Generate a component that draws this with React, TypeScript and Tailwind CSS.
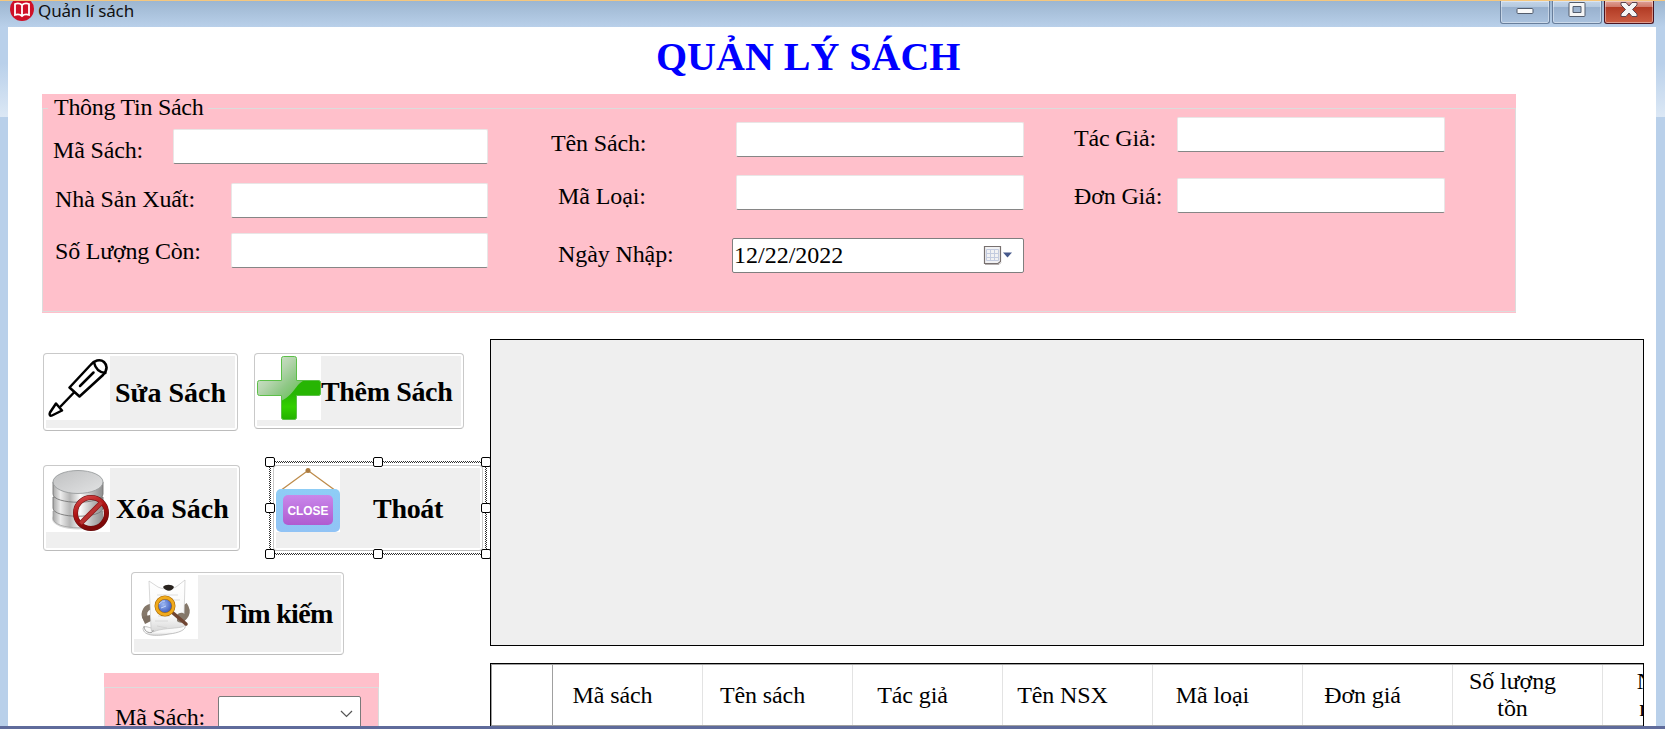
import type { ReactNode } from "react";

const serif = "font-['Liberation_Serif','Times_New_Roman',serif]";

function Label({ className, children }: { className: string; children: ReactNode }) {
  return <span className={`block whitespace-nowrap text-[24px] leading-[30px] ${className}`}>{children}</span>;
}

function Field({ className }: { className: string }) {
  return (
    <input
      className={`block h-[35px] shrink-0 rounded-[2px] border border-[#e9e6e6] border-b-[#868686] bg-white outline-none ${className}`}
    />
  );
}

function FormButton({ className, icon, children, text }: { className: string; icon: ReactNode; children: ReactNode; text: string }) {
  return (
    <button className={`flex shrink-0 items-start rounded-[4px] border border-[#c9c9c9] border-b-[#bcbcbc] bg-white p-[2px] ${className}`}>
      <span className="flex h-full w-full items-start bg-[#efefef]">
        <span className="block size-[64px] shrink-0 bg-white">{icon}</span>
        <span className={`block whitespace-nowrap text-[28px] leading-[32px] font-bold text-black ${text}`}>{children}</span>
      </span>
    </button>
  );
}

function ScrewdriverIcon() {
  return (
    <svg width="64" height="64" viewBox="0 0 64 64" fill="none" stroke="#000" strokeWidth="2.5" strokeLinejoin="round" strokeLinecap="round">
      <path d="M23.500 31.500 L44.500 9 C48 4.500 54 2.500 58 6 C62 10 60.500 15 57 19 L33.500 40.500 Z" />
      <path d="M48 6.500 C49.500 13 53 16.500 59.500 17" />
      <path d="M34 30 L47.500 16.500" />
      <path d="M28 36.500 L14.500 50.500" />
      <path d="M10 47.500 L16 54.500 L6 59.500 C4 60.500 3 58.500 4 56.500 Z" />
    </svg>
  );
}

function PlusIcon() {
  return (
    <svg width="64" height="64" viewBox="0 0 64 64">
      <defs>
        <linearGradient id="plusBase" x1="0.1" y1="0.1" x2="0.75" y2="0.75">
          <stop offset="0" stopColor="#d5e6d0" />
          <stop offset="0.3" stopColor="#b7d5b0" />
          <stop offset="0.55" stopColor="#8fc886" />
          <stop offset="1" stopColor="#58bd42" />
        </linearGradient>
        <linearGradient id="plusDeep" x1="0" y1="0" x2="0" y2="1">
          <stop offset="0.4" stopColor="#27b503" />
          <stop offset="0.7" stopColor="#33cf00" />
          <stop offset="1" stopColor="#23b000" />
        </linearGradient>
        <clipPath id="plusShape">
          <path d="M26.500 .5h11q2 0 2 2v22h22q2 0 2 2v11q0 2-2 2h-22v22q0 2-2 2h-11q-2 0-2-2v-22h-22q-2 0-2-2v-11q0-2 2-2h22v-22q0-2 2-2z" />
        </clipPath>
      </defs>
      <g clipPath="url(#plusShape)">
        <rect width="64" height="64" fill="url(#plusBase)" />
        <path d="M64 20 C50 22 46 24 41 29 C35 37 32 41 24 45 V64 H64 Z" fill="url(#plusDeep)" />
      </g>
      <path d="M26.500 .5h11q2 0 2 2v22h22q2 0 2 2v11q0 2-2 2h-22v22q0 2-2 2h-11q-2 0-2-2v-22h-22q-2 0-2-2v-11q0-2 2-2h22v-22q0-2 2-2z" fill="none" stroke="#5cbf48" strokeWidth="1" />
    </svg>
  );
}

function DatabaseIcon() {
  return (
    <svg width="64" height="64" viewBox="0 0 64 64">
      <defs>
        <linearGradient id="metal" x1="0" x2="1">
          <stop offset="0" stopColor="#a6a6a6" />
          <stop offset="0.15" stopColor="#ececec" />
          <stop offset="0.34" stopColor="#b5b5b5" />
          <stop offset="0.55" stopColor="#fafafa" />
          <stop offset="0.78" stopColor="#bbbbbb" />
          <stop offset="1" stopColor="#8f8f8f" />
        </linearGradient>
        <linearGradient id="lid" x1="0" y1="0" x2="1" y2="1">
          <stop offset="0" stopColor="#bfc0c1" />
          <stop offset="1" stopColor="#e2e3e4" />
        </linearGradient>
        <linearGradient id="ban" x1="0" y1="0" x2="0.4" y2="1">
          <stop offset="0" stopColor="#d84a4a" />
          <stop offset="0.5" stopColor="#ae1414" />
          <stop offset="1" stopColor="#7e0909" />
        </linearGradient>
      </defs>
      <ellipse cx="32" cy="51" rx="26" ry="10.500" fill="#d7d7d7" />
      <path d="M7 43 V50 C7 63 57 63 57 50 V43Z" fill="url(#metal)" stroke="#999" strokeWidth=".7" />
      <path d="M7 29 V40 C7 51 57 51 57 40 V29Z" fill="url(#metal)" stroke="#777" strokeWidth=".9" />
      <path d="M7 14 V26 C7 37 57 37 57 26 V14Z" fill="url(#metal)" stroke="#777" strokeWidth=".9" />
      <ellipse cx="32" cy="14" rx="25" ry="11.500" fill="url(#lid)" stroke="#909496" strokeWidth=".8" />
      <circle cx="45" cy="45" r="15.500" fill="none" stroke="#671010" strokeWidth="5" />
      <path d="M34 56 L56 34" stroke="#8c1717" strokeWidth="5" />
      <circle cx="45" cy="45" r="15.500" fill="none" stroke="url(#ban)" strokeWidth="4" />
      <path d="M34.500 55.500 L55.500 34.500" stroke="#b93131" strokeWidth="3.500" />
    </svg>
  );
}

function CloseSignIcon() {
  return (
    <svg width="64" height="64" viewBox="0 0 64 64">
      <defs>
        <linearGradient id="sign" x1="0" y1="0" x2="0" y2="1">
          <stop offset="0" stopColor="#c987ea" />
          <stop offset="1" stopColor="#b05bd0" />
        </linearGradient>
        <linearGradient id="board" x1="0" y1="0" x2="0" y2="1">
          <stop offset="0" stopColor="#8ecdf6" />
          <stop offset="1" stopColor="#91c3f5" />
        </linearGradient>
      </defs>
      <path d="M6 21.500 L32 2.500 L58 21.500" fill="none" stroke="#bd8b4a" strokeWidth="1.300" />
      <circle cx="32" cy="2.500" r="2.500" fill="#ac7b3f" />
      <rect x="0" y="21" width="64" height="43" rx="5" fill="url(#board)" />
      <rect x="7" y="27" width="50" height="30" rx="5" fill="url(#sign)" />
      <text x="32" y="47" textAnchor="middle" fontFamily="Liberation Sans, sans-serif" fontWeight="700" fontSize="12" textLength="41" lengthAdjust="spacingAndGlyphs" fill="#fff">CLOSE</text>
    </svg>
  );
}

function SearchPaperIcon() {
  return (
    <svg width="64" height="64" viewBox="0 0 64 64">
      <defs>
        <linearGradient id="paper" x1="0" y1="0" x2="0" y2="1">
          <stop offset="0" stopColor="#ffffff" />
          <stop offset="0.7" stopColor="#f8f8f8" />
          <stop offset="1" stopColor="#d6d6d6" />
        </linearGradient>
        <radialGradient id="glass" cx="0.4" cy="0.4" r="0.7">
          <stop offset="0" stopColor="#9db8f2" />
          <stop offset="0.5" stopColor="#5d7bd0" />
          <stop offset="1" stopColor="#2a3f96" />
        </radialGradient>
      </defs>
      <path d="M17 31.500 C10 33 9 40 12 44" fill="none" stroke="#85786a" strokeWidth="5.500" />
      <path d="M50 30 C55 37 52 44 43 44" fill="none" stroke="#85786a" strokeWidth="6.500" />
      <path d="M8 42 l8 -2 1 6 -6 3z" fill="#7d6f62" />
      <path d="M9 53 C11 50 15 53 18 53 L51 50 C53 55 44 58 35 59 C25 61 9 62 9 53Z" fill="url(#paper)" stroke="#aaa" strokeWidth=".7" />
      <path d="M15 6 L24 12 C30 15 38 14 42 12 L51 5 L50 43 C51 49 52 51 48 52 C38 54 28 53 19 57 Q17 57 17 53 Z" fill="url(#paper)" stroke="#bdbdbd" strokeWidth=".6" />
      <path d="M23 20h21M23 25h23M24 41h12M21 46h13M23 51l10 2" fill="none" stroke="#c9c9c9" strokeWidth=".6" />
      <path d="M10 51 C10 59 20 59 19 55" fill="none" stroke="#888" strokeWidth=".8" />
      <path d="M29 12 C31 9 38 9 40 12 C38 17 32 17 29 12Z" fill="#29231f" />
      <path d="M43 40 C46 36 52 38 52 42 C52 48 46 49 43 46 Z" fill="#85786a" />
      <path d="M39 38 L52 49" stroke="#704532" strokeWidth="3.500" strokeLinecap="round" />
      <circle cx="31" cy="31" r="8.500" fill="url(#glass)" stroke="#a86a08" strokeWidth="4" />
      <circle cx="31" cy="31" r="8.500" fill="none" stroke="#f0aa1c" strokeWidth="2.800" />
      <path d="M25 29q4-4 6-3M27 33l5-2" stroke="#c2d3fa" strokeWidth="1" fill="none" />
    </svg>
  );
}

function BookIcon() {
  return (
    <svg width="24" height="20" viewBox="0 0 24 20" className="block">
      <circle cx="12" cy="8" r="12" fill="#cf1027" />
      <path d="M5 3 Q9 1.500 12 4 Q15 1.500 19 3 V14 Q15 12.500 12 15 Q9 12.500 5 14Z M12 4V15" fill="none" stroke="#fff" strokeWidth="1.800" />
    </svg>
  );
}

function TitleBar() {
  const box = "flex h-[23px] w-[50px] items-start justify-center rounded-b-[3px] border border-t-0 shadow-[inset_0_0_0_1px_rgba(255,255,255,0.4)]";
  const blue = "border-[#687e9b] bg-[linear-gradient(to_bottom,#c3d4e8_0,#b5c9df_27%,#98b0cd_27%,#aac2de_100%)]";
  const red = "border-[#4c1420] bg-[linear-gradient(to_bottom,#e0a196_0,#cf7a6b_27%,#b13a24_27%,#cb5c42_100%)]";
  return (
    <header className="flex h-[27px] items-start border-t border-[#f5c77e] bg-linear-to-b from-[#9db6d0] to-[#b9d0ea] pl-[10px] pr-[11px]">
      <BookIcon />
      <span className="ml-[4px] -mt-px block h-[22px] whitespace-nowrap font-['Noto_Sans',sans-serif] text-[17px] leading-[22px] tracking-[-0.15px] text-[#111]">Quản lí sách</span>
      <div className="ml-auto flex gap-[2px]">
        <div className={`${box} ${blue}`}>
          <svg width="18" height="16" viewBox="0 0 18 16"><rect x="1" y="7.500" width="16" height="5" rx="1" fill="#fafafa" stroke="#535c6c" /></svg>
        </div>
        <div className={`${box} ${blue}`}>
          <svg width="18" height="17" viewBox="0 0 18 17"><path fillRule="evenodd" d="M2 1.500H16Q17 1.500 17 2.500V14.500Q17 15.500 16 15.500H2Q1 15.500 1 14.500V2.500Q1 1.500 2 1.500ZM5 5.500V11.500H13V5.500Z" fill="#f5f5f5" stroke="#535c6c" /></svg>
        </div>
        <div className={`${box} ${red}`}>
          <svg width="18" height="17" viewBox="0 0 18 17"><path d="M1 1.500H6L9 5L12 1.500H17V4L12.500 8.500L17 13V15.500H12L9 12L6 15.500H1V13L5.500 8.500L1 4Z" fill="#f5f5f5" stroke="#5b4550" strokeLinejoin="round" /></svg>
        </div>
      </div>
    </header>
  );
}

function BookInfo() {
  return (
    <section className="ml-[34px] mt-[10px] flex h-[219px] w-[1474px] flex-col bg-[#ffc0cb]">
      <div className="flex h-[29px] shrink-0 items-start">
        <span className="mt-[14px] h-px w-[6px] bg-[#dcdcdc]" />
        <Label className="-mt-[2px] w-[160px] pl-[6px] tracking-[-0.28px]">Thông Tin Sách</Label>
        <span className="mt-[14px] h-px flex-1 bg-[#dcdcdc]" />
      </div>
      <div className="-mt-[14px] mb-px flex flex-1 border border-t-0 border-[#dcdcdc]">
        <div className="w-[445px] shrink-0">
          <div className="mt-[20px] flex h-[35px]">
            <Label className="mt-[6px] w-[130px] pl-[10px] tracking-[-0.15px]">Mã Sách:</Label>
            <Field className="w-[315px]" />
          </div>
          <div className="mt-[19px] flex h-[35px]">
            <Label className="mt-px w-[188px] pl-[12px] tracking-[-0.1px]">Nhà Sản Xuất:</Label>
            <Field className="w-[257px]" />
          </div>
          <div className="mt-[15px] flex h-[35px]">
            <Label className="mt-[3px] w-[188px] pl-[12px] tracking-[-0.2px]">Số Lượng Còn:</Label>
            <Field className="w-[257px]" />
          </div>
        </div>
        <div className="ml-[63px] w-[473px] shrink-0">
          <div className="mt-[13px] flex h-[35px]">
            <Label className="mt-[6px] w-[185px] tracking-[-0.15px]">Tên Sách:</Label>
            <Field className="w-[288px]" />
          </div>
          <div className="mt-[18px] flex h-[35px]">
            <Label className="mt-[6px] w-[185px] pl-[7px] tracking-[-0.1px]">Mã Loại:</Label>
            <Field className="w-[288px]" />
          </div>
          <div className="mt-[28px] flex h-[35px]">
            <Label className="mt-px w-[181px] pl-[7px] tracking-[-0.1px]">Ngày Nhập:</Label>
            <div className="flex h-[35px] w-[292px] items-start rounded-[2px] border border-[#7f7f7f] bg-white pl-px">
              <Label className="mt-px">12/22/2022</Label>
              <svg className="ml-auto mr-[10px] mt-[6px]" width="30" height="22" viewBox="0 0 30 22">
                <path d="M1.500 1.500H17.500V16.500L15 18.500H1.500Z" fill="#f1f1f3" stroke="#77706f" strokeWidth="1.200" />
                <path d="M3.500 4.500h12v11h-12zM7.500 4.500v11M11.500 4.500v11M3.500 8.500h12M3.500 12.500h12" fill="none" stroke="#c3cbdf" />
                <path d="M2 19.500h14l2-2" fill="none" stroke="#b5b0b0" />
                <path d="M20 7.500h9l-4.500 5z" fill="#46598c" />
              </svg>
            </div>
          </div>
        </div>
        <div className="ml-[50px]">
          <div className="mt-[8px] flex h-[35px]">
            <Label className="mt-[6px] w-[103px] tracking-[-0.15px]">Tác Giả:</Label>
            <Field className="w-[268px]" />
          </div>
          <div className="mt-[26px] flex h-[35px]">
            <Label className="mt-[3px] w-[103px] tracking-[-0.15px]">Đơn Giá:</Label>
            <Field className="w-[268px]" />
          </div>
        </div>
      </div>
    </section>
  );
}

const handles = [
  "-left-[4px] -top-[4px]",
  "left-[104px] -top-[4px]",
  "left-[212px] -top-[4px]",
  "-left-[4px] top-[42px]",
  "left-[212px] top-[42px]",
  "-left-[4px] top-[88px]",
  "left-[104px] top-[88px]",
  "left-[212px] top-[88px]",
];

function Actions() {
  return (
    <div className="w-[448px] shrink-0">
      <div className="mt-[14px] flex h-[78px] items-start pl-[1px]">
        <FormButton className="h-[78px] w-[195px]" icon={<ScrewdriverIcon />} text="ml-[5px] mt-[21px]">Sửa Sách</FormButton>
        <FormButton className="ml-[16px] h-[76px] w-[210px]" icon={<PlusIcon />} text="mt-[20px] tracking-[-0.35px]">Thêm Sách</FormButton>
      </div>
      <div className="mt-[34px] flex h-[86px] items-start pl-[1px]">
        <FormButton className="h-[86px] w-[197px]" icon={<DatabaseIcon />} text="ml-[6px] mt-[25px]">Xóa Sách</FormButton>
        <div className="relative -mt-[4px] ml-[29px] flex h-[94px] w-[218px] shrink-0 items-start p-[4px]">
          <svg className="absolute left-0 top-0" width="218" height="94">
            <defs>
              <pattern id="dots" width="2" height="2" patternUnits="userSpaceOnUse">
                <rect width="1" height="1" fill="#333" />
                <rect x="1" y="1" width="1" height="1" fill="#333" />
              </pattern>
            </defs>
            <path fillRule="evenodd" d="M0 0H218V94H0ZM2 2V92H216V2Z" fill="url(#dots)" />
          </svg>
          <FormButton className="h-[86px] w-[210px]" icon={<CloseSignIcon />} text="ml-[33px] mt-[25px] tracking-[-0.3px]">Thoát</FormButton>
          {handles.map((place) => (
            <span key={place} className={`absolute size-[10px] rounded-[2px] border border-black bg-white ${place}`} />
          ))}
        </div>
      </div>
      <FormButton className="ml-[89px] mt-[21px] h-[83px] w-[213px]" icon={<SearchPaperIcon />} text="ml-[24px] mt-[23px] tracking-[-0.65px]">Tìm kiếm</FormButton>
      <section className="ml-[62px] mt-[18px] flex h-[60px] w-[275px] flex-col bg-[#ffc0cb] pt-[14px]">
        <div className="flex flex-1 border border-b-0 border-[#dcdcdc]">
          <Label className="mt-[14px] w-[113px] pl-[10px] tracking-[-0.15px]">Mã Sách:</Label>
          <div className="mt-[8px] flex h-[35px] w-[143px] items-center justify-end rounded-[2px] border border-[#7a7a7a] bg-white pr-[7px]">
            <svg width="13" height="8" viewBox="0 0 13 8" fill="none" stroke="#555" strokeWidth="1.200"><path d="M1 1l5.500 5.500L12 1" /></svg>
          </div>
        </div>
      </section>
    </div>
  );
}

const columns = ["Mã sách", "Tên sách", "Tác giả", "Tên NSX", "Mã loại", "Đơn giá", "Số lượng tồn", "Ngày nhập"];

function Tables() {
  return (
    <div className="relative z-10 w-[1154px] shrink-0">
      <div className="h-[307px] border border-black bg-[#efefef]" />
      <div className="mt-[17px] h-[80px] overflow-hidden border border-black bg-white">
        <div className="flex h-[62px] w-[1300px] border-b border-l border-t border-[#a0a0a0]">
          <span className="w-[61px] shrink-0 border-r border-[#a0a0a0]" />
          {columns.map((name) => (
            <span key={name} className="flex w-[150px] shrink-0 items-center justify-center border-r border-[#e3e3e3] pl-[10px] pr-[40px] text-center text-[24px] leading-[27px] tracking-[-0.1px]">
              {name}
            </span>
          ))}
        </div>
      </div>
    </div>
  );
}

export default function App() {
  return (
    <div className={`flex h-[729px] w-[1665px] flex-col overflow-hidden bg-[#b9d0ea] text-black ${serif}`}>
      <TitleBar />
      <div className="flex min-h-0 flex-1">
        <div className="w-[8px] shrink-0">
          <div className="h-[90px] bg-linear-to-b from-[#b9d0ea] from-40% to-[#dce8f5]" />
        </div>
        <main className="h-full w-[1648px] shrink-0 overflow-hidden bg-white">
          <h1 className="-mt-[2px] mb-[12px] pl-[648px] pt-[7px] text-[40px] leading-[50px] font-bold whitespace-nowrap text-[#0000ff]">QUẢN LÝ SÁCH</h1>
          <BookInfo />
          <div className="ml-[34px] mt-[26px] flex items-start">
            <Actions />
            <Tables />
          </div>
        </main>
        <div className="w-[9px] shrink-0">
          <div className="h-[90px] bg-linear-to-b from-[#b9d0ea] from-40% to-[#dce8f5]" />
        </div>
      </div>
      <footer className="h-[3px] shrink-0 bg-[#5f6b9b]" />
    </div>
  );
}
